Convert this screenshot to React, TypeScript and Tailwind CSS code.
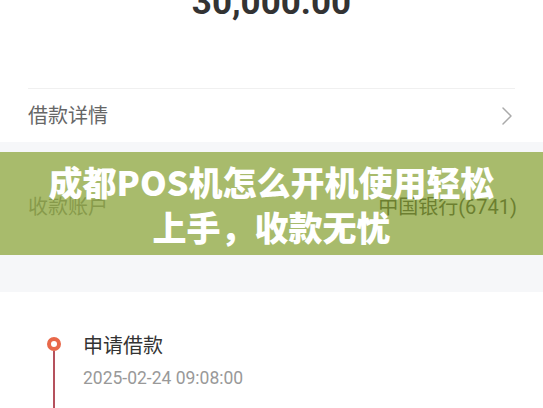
import { ChevronRight } from 'lucide-react'

const cjk = "font-['Roboto','Noto_Sans_CJK_SC',sans-serif]"

export default function App() {
    return (
        <div className={`relative h-[408px] w-[543px] overflow-hidden bg-[#f6f7f9] ${cjk}`}>
            {/* amount card */}
            <div className="bg-white h-[142px] flex flex-col">
                <div className="-mt-[15px] h-[36px] text-center text-[35px] leading-none font-bold text-[#333]">30,000.00</div>
                <div className="mt-[67px] mx-[28px] h-px bg-[#f0f0f0]" />
                <div className="mx-[28px] h-[53px] flex items-center justify-between">
                    <span className="text-[20px] text-[#666]">借款详情</span>
                    <ChevronRight className="w-[32px] h-[32px] text-[#aaa] -mr-[8px]" strokeWidth={1.1} />
                </div>
            </div>

            {/* account card */}
            <div className="mt-[10px] bg-white h-[103px] pt-[7px] px-[28px] flex items-center justify-between">
                <span className="text-[20px] text-[#999]">收款账户</span>
                <span className="text-[20px] text-[#444] -mr-[2px]">中国银行(6741)</span>
            </div>

            {/* timeline card */}
            <div className="mt-[37px] bg-white h-[200px] pt-[40px] flex">
                <div className="w-[83px] shrink-0 flex flex-col items-start pl-[47px] pt-[5px]">
                    <div className="w-[14px] h-[14px] rounded-full border-[4.5px] border-[#e8684a] bg-white shrink-0" />
                    <div className="ml-[6px] w-[2px] grow bg-[#b5515d]" />
                </div>
                <div className="flex flex-col">
                    <span className="text-[20px] leading-[28px] text-[#333]">申请借款</span>
                    <span className="mt-[6px] text-[17.5px] leading-[24px] text-[#999]">2025-02-24 09:08:00</span>
                </div>
            </div>

            {/* title banner */}
            <div className="absolute left-0 right-0 top-[152px] h-[103px] bg-[rgba(127,155,39,0.68)] flex items-center justify-center">
                <h1 className="text-center text-white text-[34px] leading-[45px] font-black font-['Noto_Sans_CJK_SC',sans-serif]">
                    成都POS机怎么开机使用轻松<br />上手，收款无忧
                </h1>
            </div>
        </div>
    )
}
